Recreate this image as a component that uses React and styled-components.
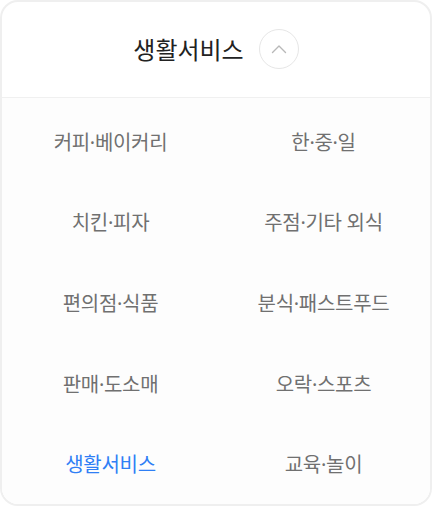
import React from 'react';
import styled, { createGlobalStyle } from 'styled-components';

const GlobalStyle = createGlobalStyle`
  html, body {
    margin: 0;
    background: #ffffff;
    font-family: "Noto Sans", "Noto Sans CJK KR", sans-serif;
  }
  * { box-sizing: border-box; }
`;

const Card = styled.div`
  width: 432px;
  height: 506px;
  border: 2px solid #efefef;
  border-radius: 18px;
  background: #ffffff;
  display: flex;
  flex-direction: column;
  overflow: hidden;
`;

const Header = styled.div`
  height: 96px;
  flex-shrink: 0;
  display: flex;
  align-items: center;
  justify-content: center;
  gap: 15px;
  border-bottom: 1px solid #f0f0f0;
  padding-bottom: 2px;
`;

const Title = styled.h2`
  margin: 0;
  font-size: 24px;
  font-weight: 400;
  color: #222;
  letter-spacing: 0;
`;

const ToggleButton = styled.button`
  width: 40px;
  height: 40px;
  border-radius: 50%;
  border: 1.5px solid #e6e6e6;
  background: #fff;
  display: flex;
  align-items: center;
  justify-content: center;
  padding: 0;
  cursor: pointer;
`;

const Grid = styled.div`
  flex: 1;
  display: grid;
  grid-template-columns: 1fr 1fr;
  grid-template-rows: repeat(5, 1fr);
  background: #fdfdfd;
  padding: 3px 0 0 2px;
`;

const Item = styled.div`
  display: flex;
  align-items: center;
  justify-content: center;
  font-size: 20px;
  color: ${(p) => (p.$active ? '#2f7ff5' : '#707070')};
  letter-spacing: -0.3px;
`;

const categories = [
  '커피·베이커리', '한·중·일',
  '치킨·피자', '주점·기타 외식',
  '편의점·식품', '분식·패스트푸드',
  '판매·도소매', '오락·스포츠',
  '생활서비스', '교육·놀이',
];

export default function App() {
  const active = '생활서비스';
  return (
    <>
      <GlobalStyle />
      <Card>
        <Header>
          <Title>{active}</Title>
          <ToggleButton aria-label="접기">
            <svg width="16" height="10" viewBox="0 0 16 10" fill="none">
              <path d="M1.5 8.5 L8 2 L14.5 8.5" stroke="#b8b8b8" strokeWidth="1.4" strokeLinecap="round" strokeLinejoin="round" />
            </svg>
          </ToggleButton>
        </Header>
        <Grid>
          {categories.map((c) => (
            <Item key={c} $active={c === active}>{c}</Item>
          ))}
        </Grid>
      </Card>
    </>
  );
}
